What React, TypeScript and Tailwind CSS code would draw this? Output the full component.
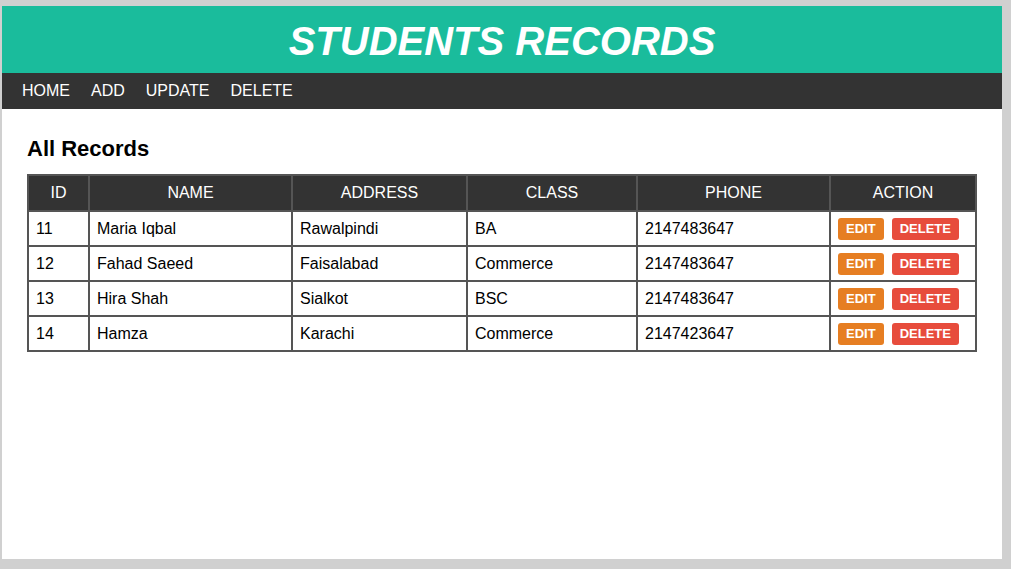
import React from "react"

interface Student {
  id: number
  name: string
  address: string
  klass: string
  phone: string
}

const students: Student[] = [
  { id: 11, name: "Maria Iqbal", address: "Rawalpindi", klass: "BA", phone: "2147483647" },
  { id: 12, name: "Fahad Saeed", address: "Faisalabad", klass: "Commerce", phone: "2147483647" },
  { id: 13, name: "Hira Shah", address: "Sialkot", klass: "BSC", phone: "2147483647" },
  { id: 14, name: "Hamza", address: "Karachi", klass: "Commerce", phone: "2147423647" },
]

const navLinks = ["HOME", "ADD", "UPDATE", "DELETE"]

const th = "border-2 border-[#555] bg-[#333] text-white font-normal text-[16px] text-center h-[36px] p-0"
const td = "border-2 border-[#555] text-[16px] text-black px-[7px] h-[35px] py-0 text-left"

const App: React.FC = () => {
  return (
    <div className="min-h-[569px] bg-[#d0d0d0] pt-[6px] pl-[2px] font-['Liberation_Sans',Arial,sans-serif]">
      <div className="w-[1000px] h-[553px] bg-white">
        <header className="h-[67px] bg-[#1abc9c] flex items-center justify-center">
          <h1 className="text-white italic font-bold text-[40px] leading-none pt-[2px]">STUDENTS RECORDS</h1>
        </header>
        <nav className="h-[36px] bg-[#333] flex items-center px-[10px] gap-[1px]">
          {navLinks.map((link) => (
            <a key={link} href="#" className="text-white text-[16px] px-[10px]">
              {link}
            </a>
          ))}
        </nav>
        <main className="px-[25px]">
          <h2 className="text-[22px] font-bold text-black mt-[27px] mb-[13px] leading-[25px]">All Records</h2>
          <table className="w-[948px] table-fixed border-collapse">
            <colgroup>
              <col className="w-[61px]" />
              <col className="w-[203px]" />
              <col className="w-[175px]" />
              <col className="w-[170px]" />
              <col className="w-[193px]" />
              <col className="w-[146px]" />
            </colgroup>
            <thead>
              <tr>
                <th className={th}>ID</th>
                <th className={th}>NAME</th>
                <th className={th}>ADDRESS</th>
                <th className={th}>CLASS</th>
                <th className={th}>PHONE</th>
                <th className={th}>ACTION</th>
              </tr>
            </thead>
            <tbody>
              {students.map((s) => (
                <tr key={s.id}>
                  <td className={td}>{s.id}</td>
                  <td className={td}>{s.name}</td>
                  <td className={td}>{s.address}</td>
                  <td className={td}>{s.klass}</td>
                  <td className={td}>{s.phone}</td>
                  <td className={td}>
                    <div className="flex gap-[8px]">
                      <a href="#" className="bg-[#e67e22] text-white font-bold text-[13px] leading-[16px] px-2 py-[3px] rounded-[3px]">
                        EDIT
                      </a>
                      <a href="#" className="bg-[#e74c3c] text-white font-bold text-[13px] leading-[16px] px-2 py-[3px] rounded-[3px]">
                        DELETE
                      </a>
                    </div>
                  </td>
                </tr>
              ))}
            </tbody>
          </table>
        </main>
      </div>
    </div>
  )
}

export default App
